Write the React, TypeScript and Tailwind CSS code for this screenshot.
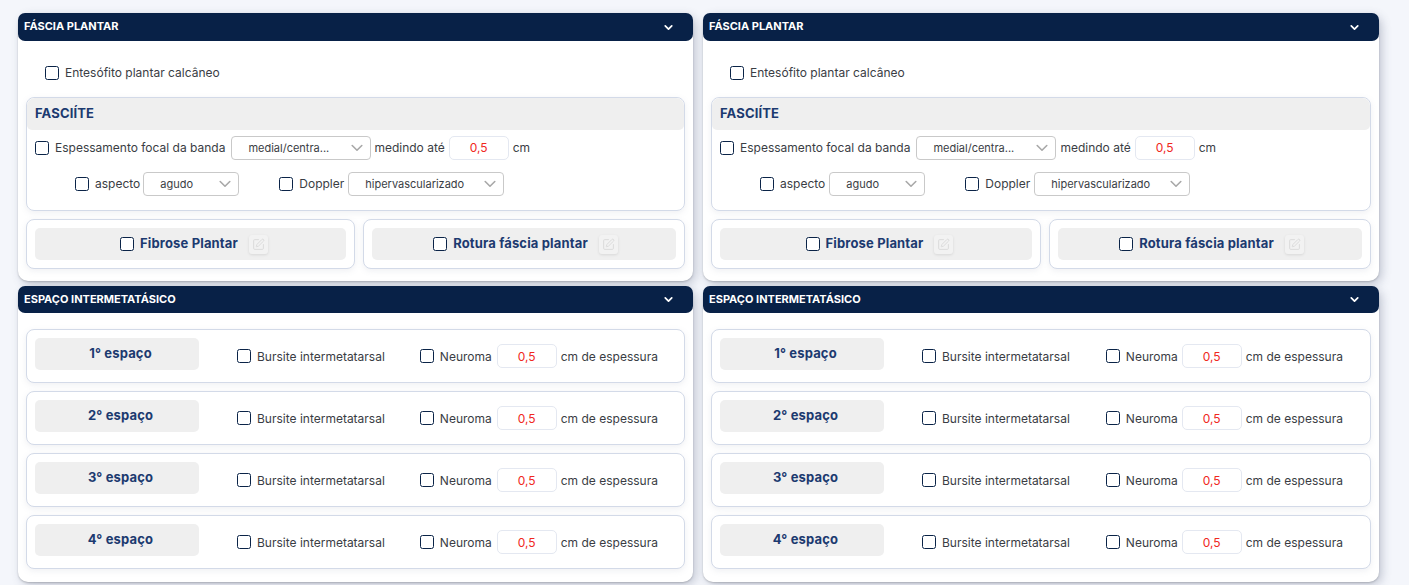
import React from "react";
import { ChevronDown, SquarePen } from "lucide-react";

const cardShadow = "shadow-[3px_3px_10px_rgba(80,90,120,0.3),0_1px_2px_rgba(0,0,0,0.2)]";

function Cb() {
  return <span className="block w-[14px] h-[14px] shrink-0 rounded-[2.5px] border border-[#0a2347] bg-white" />;
}

function Sel({ w, label, pl }: { w: string; label: string; pl: string }) {
  return (
    <div className={`${w} ${pl} h-6 shrink-0 flex items-center justify-between pr-[7px] rounded-[4px] border border-[#c9c9c9] bg-white text-[11px] text-[#3a3d44]`}>
      <span>{label}</span>
      <svg width="12" height="8" viewBox="0 0 12 8" fill="none" stroke="#a8a8a8" strokeWidth="1.6" strokeLinecap="round" strokeLinejoin="round"><path d="M1.2 1.5 6 6.2l4.8-4.7" /></svg>
    </div>
  );
}

function Num({ low }: { low?: boolean }) {
  return <div className={`${low ? "pt-[2px]" : ""} w-[60px] h-6 shrink-0 flex items-center justify-center rounded-[5px] border border-[#e4e8f1] bg-white text-[12px] text-[#f0281e]`}>0,5</div>;
}

function Header({ title, h, up }: { title: string; h: string; up?: boolean }) {
  return (
    <div className={`${h} flex items-center justify-between pl-[6px] pr-[18px] rounded-[7px] bg-[#082147] text-white`}>
      <span className={`${up ? "pb-[2px]" : ""} text-[11px] font-bold`}>{title}</span>
      <ChevronDown size={13} strokeWidth={3.2} />
    </div>
  );
}

function ActionBox({ label, box, shift }: { label: string; box: string; shift: string }) {
  return (
    <div className={`${box} h-[50px] rounded-[8px] border border-[#d3dae8] bg-white p-2 shadow-[0_2px_6px_rgba(120,130,160,0.12)]`}>
      <div className={`${shift} h-8 rounded-[5px] bg-[#efefef] flex items-center justify-center`}>
        <Cb />
        <span className="ml-[6px] text-[13px] font-bold tracking-[0.15px] text-[#1c3a70]">{label}</span>
        <span className="ml-[11px] w-[19px] h-[19px] flex items-center justify-center rounded-[3px] bg-[#f2f2f2] shadow-[0_1px_3px_rgba(0,0,0,0.1)]">
          <SquarePen size={13} strokeWidth={1.6} className="text-[#d8d8d8]" />
        </span>
      </div>
    </div>
  );
}

function Fascia({ right }: { right?: boolean }) {
  return (
    <div className={`h-[268px] rounded-[10px] bg-white ${cardShadow}`}>
      <Header title="FÁSCIA PLANTAR" h="h-[28px]" up />
      <div className="h-[56px] pl-[27px] pt-[25px] flex items-start gap-[6px] text-[12px] text-[#3a3d44]">
        <Cb />
        <span className="leading-[14px]">Entesófito plantar calcâneo</span>
      </div>
      <div className="mx-2 h-[114px] rounded-[8px] border border-[#d3dae8] shadow-[0_2px_6px_rgba(120,130,160,0.12)]">
        <div className="h-[32px] rounded-t-[8px] rounded-b-[5px] bg-[#efefef] pl-2 flex items-center text-[13px] font-bold text-[#1c3a70] tracking-[0.15px]">FASCIÍTE</div>
        <div className="pl-2 pt-[6px] flex items-center text-[12px] text-[#3a3d44]">
          <Cb />
          <span className="ml-[6px]">Espessamento focal da banda</span>
          <div className="ml-[6px]"><Sel w="w-[140px]" label="medial/centra..." pl="pl-4" /></div>
          <span className={right ? "ml-[4px]" : "ml-[3px]"}>medindo até</span>
          <div className="ml-[4px]"><Num /></div>
          <span className="ml-[4px]">cm</span>
        </div>
        <div className="pl-[48px] pt-3 flex items-center text-[12px] text-[#3a3d44]">
          <Cb />
          <span className="ml-[6px]">aspecto</span>
          <div className={right ? "ml-[4px]" : "ml-[3px]"}><Sel w="w-[96px]" label="agudo" pl="pl-4" /></div>
          <div className="ml-[40px]"><Cb /></div>
          <span className="ml-[6px]">Doppler</span>
          <div className="ml-[4px]"><Sel w="w-[156px]" label="hipervascularizado" pl="pl-4" /></div>
        </div>
      </div>
      <div className="mx-2 mt-2 flex gap-2">
        <ActionBox label="Fibrose Plantar" box="flex-1" shift="pl-[7px]" />
        <ActionBox label="Rotura fáscia plantar" box="w-[322px]" shift="pl-[3px]" />
      </div>
    </div>
  );
}

function Row({ n, right }: { n: number; right?: boolean }) {
  return (
    <div className="h-[54px] rounded-[8px] border border-[#d3dae8] bg-white pl-2 flex items-center text-[12px] text-[#3a3d44] shadow-[0_2px_6px_rgba(120,130,160,0.12)]">
      <div className="w-[164px] h-8 pl-[7px] rounded-[5px] bg-[#efefef] flex items-center justify-center text-[13px] font-bold tracking-[0.15px] text-[#1c3a70] -mt-[4px]">{n}° espaço</div>
      <div className="ml-[38px] flex items-center">
        <Cb />
        <span className="ml-[6px] pt-[2px]">Bursite intermetatarsal</span>
      </div>
      <div className={`${right ? "ml-[36px]" : "ml-[35px]"} flex items-center`}>
        <Cb />
        <span className="ml-[6px] pt-[2px]">Neuroma</span>
        <div className={right ? "ml-[4px]" : "ml-[5px]"}><Num low /></div>
        <span className="ml-[4px] pt-[2px]">cm de espessura</span>
      </div>
    </div>
  );
}

function Espaco({ right }: { right?: boolean }) {
  return (
    <div className={`mt-[5px] h-[296px] rounded-[10px] bg-white ${cardShadow}`}>
      <Header title="ESPAÇO INTERMETATÁSICO" h="h-[27px]" />
      <div className="mx-2 mt-4 flex flex-col gap-2">
        {[1, 2, 3, 4].map((n) => <Row key={n} n={n} right={right} />)}
      </div>
    </div>
  );
}

export default function App() {
  return (
    <div className="h-[585px] overflow-hidden bg-[#f4f6fb] pt-[13px] pl-[18px] flex gap-[10px] font-['Inter','Liberation_Sans',sans-serif]">
      <div className="w-[675px]"><Fascia /><Espaco /></div>
      <div className="w-[676px]"><Fascia right /><Espaco right /></div>
    </div>
  );
}
